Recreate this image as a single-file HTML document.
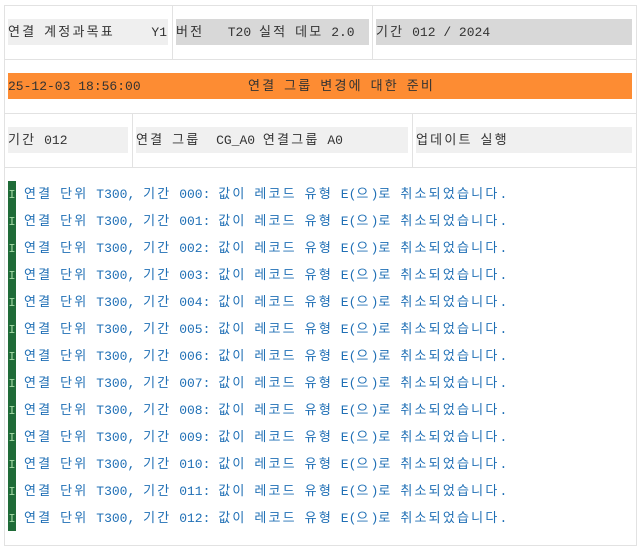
<!DOCTYPE html>
<html><head><meta charset="utf-8"><style>
*{margin:0;padding:0;box-sizing:border-box}
body{width:639px;height:550px;background:#fff;font-family:"Liberation Mono","Noto Sans CJK KR",monospace;font-size:13px;color:#333;position:relative;overflow:hidden}
.a{position:absolute}
.box{position:absolute;height:26px;line-height:28px;white-space:pre}
.l{position:absolute;left:24px;color:#1f6fb5;white-space:pre;line-height:28px}
.k{letter-spacing:2.2px}
</style></head><body>
<div class="a" style="left:4px;top:5px;width:633px;height:541px;border:1px solid #e2e2e2"></div>
<div class="a" style="left:4px;top:59px;width:633px;border-top:1px solid #e2e2e2"></div>
<div class="a" style="left:4px;top:113px;width:633px;border-top:1px solid #e2e2e2"></div>
<div class="a" style="left:4px;top:167px;width:633px;border-top:1px solid #e2e2e2"></div>
<div class="a" style="left:172px;top:5px;height:54px;border-left:1px solid #e2e2e2"></div>
<div class="a" style="left:372px;top:5px;height:54px;border-left:1px solid #e2e2e2"></div>
<div class="a" style="left:132px;top:113px;height:54px;border-left:1px solid #e2e2e2"></div>
<div class="a" style="left:412px;top:113px;height:54px;border-left:1px solid #e2e2e2"></div>

<div id="c">
<div class="box" style="left:8px;top:19px;width:160px;background:#efefef">연결 계정과목표<span style="position:absolute;right:1px">Y1</span></div>
<div class="box" style="left:176px;top:19px;width:193px;background:#d8d8d8">버전   T20 실적 데모 2.0</div>
<div class="box" style="left:376px;top:19px;width:256px;background:#d8d8d8">기간 012 / 2024</div>

<div class="box" style="left:8px;top:73px;width:624px;background:#fd8c33">25-12-03 18:56:00<span style="position:absolute;left:240px">연결 그룹 변경에 대한 준비</span></div>

<div class="box" style="left:8px;top:127px;width:120px;background:#f0f0f0">기간 012</div>
<div class="box" style="left:136px;top:127px;width:272px;background:#f0f0f0">연결 그룹  CG_A0 연결그룹 A0</div>
<div class="box" style="left:416px;top:127px;width:216px;background:#f0f0f0">업데이트 실행</div>
<div class="a" style="left:8px;top:181px;width:8px;height:350px;background:#1f6b38"></div>
<div id="log"></div>
</div>
<script>
var h='';for(var i=0;i<13;i++){var t=180.5+i*27;var n=('00'+i).slice(-3);
h+='<div class="a" style="left:8px;top:'+t+'px;width:8px;line-height:28px;color:#a6dba6;font-size:12px;text-align:center">I</div>';
h+='<div class="l" style="top:'+t+'px">연결 단위 T300, 기간 '+n+': 값이 레코드 유형 E(으)로 취소되었습니다.</div>';}
document.getElementById('log').innerHTML=h;
function w(n){if(n.nodeType==3){var s=n.nodeValue;if(/[\uAC00-\uD7A3]/.test(s)){var d=document.createElement('span');d.innerHTML=s.replace(/[\uAC00-\uD7A3]+/g,function(m){return '<span class="k">'+m+'</span>'});n.parentNode.replaceChild(d,n);}}else{var c=Array.prototype.slice.call(n.childNodes);c.forEach(w);}}
w(document.getElementById('c'));
</script>
</body></html>
